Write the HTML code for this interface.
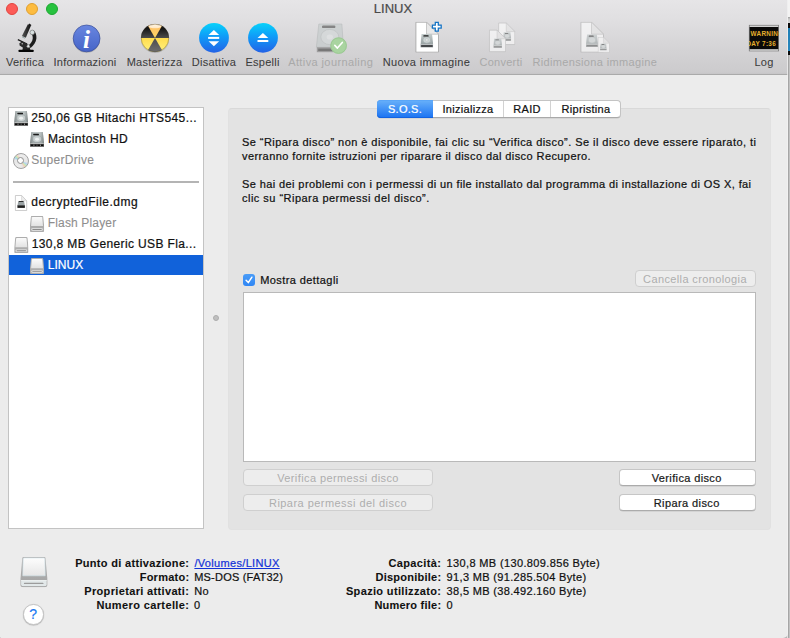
<!DOCTYPE html>
<html lang="it">
<head>
<meta charset="utf-8">
<title>LINUX</title>
<style>
html,body{margin:0;padding:0;}
body{width:790px;height:638px;overflow:hidden;position:relative;background:#b4b4b4;font-family:"Liberation Sans",sans-serif;font-size:11px;color:#1a1a1a;-webkit-text-stroke:0.22px currentColor;}
.abs{position:absolute;}
#win{position:absolute;left:0;top:0;width:788px;height:638px;background:#ececec;border-radius:0 0 5px 1.5px;overflow:hidden;}
#tb{position:absolute;left:0;top:0;width:788px;height:74px;background:linear-gradient(#e6e5e7 0px,#e0dfe1 20px,#d4d3d5 50px,#cccbcd 72px,#c6c5c7 74px);border-bottom:1px solid #aaaaaa;}
.tl{position:absolute;top:3px;width:12px;height:12px;border-radius:50%;box-sizing:border-box;}
#title{position:absolute;left:0;width:786px;top:1px;text-align:center;font-size:13px;line-height:16px;color:#4a4a4a;}
.tlab{-webkit-text-stroke:0.06px currentColor;position:absolute;top:55px;height:14px;line-height:14px;font-size:11px;color:#3c3c3c;white-space:nowrap;text-align:center;transform:translateX(-50%);letter-spacing:0.25px;}
.tlab.dis{color:#a9a9a9;-webkit-text-stroke:0;}
#side{position:absolute;left:8px;top:107px;width:194px;height:420px;background:#fff;border:1px solid #c3c3c3;}
.row{position:absolute;height:21px;line-height:21px;font-size:12px;white-space:nowrap;color:#111;letter-spacing:0.28px;}
.row.g{color:#8e8e8e;-webkit-text-stroke:0.1px currentColor;}
#box{position:absolute;left:228px;top:108px;width:543px;height:421.5px;background:#e3e3e3;border:1px solid #e1e1e1;border-top-color:#d9d9d9;border-radius:4px;box-sizing:border-box;}
.p{position:absolute;left:242px;font-size:11px;line-height:14px;white-space:nowrap;color:#111;letter-spacing:0.27px;}
.btn{position:absolute;box-shadow:0 0.5px 0.6px rgba(0,0,0,.14);height:17px;line-height:16px;box-sizing:border-box;border-radius:4px;background:#fff;border:1px solid #c6c6c6;border-bottom-color:#ababab;text-align:center;font-size:11px;color:#1a1a1a;letter-spacing:0.3px;white-space:nowrap;}
.btn.dis{-webkit-text-stroke:0;box-shadow:none;background:#ededed;border-color:#cfcfcf;color:#aeaeae;}
.tab{position:absolute;top:100px;height:18px;line-height:18.4px;text-align:center;font-size:11px;color:#111;letter-spacing:0.3px;white-space:nowrap;}
.inf{position:absolute;font-size:11px;line-height:14px;white-space:nowrap;color:#111;letter-spacing:0.25px;}
.inf.b{font-weight:bold;text-align:right;letter-spacing:0.2px;-webkit-text-stroke:0.08px currentColor;}
</style>
</head>
<body>
<div id="edge" class="abs" style="left:788px;top:0;width:2px;height:638px;background:linear-gradient(90deg,#a6a6a6 0,#a6a6a6 1px,#c2c2c2 1px,#c2c2c2 2px);"></div>
<div class="abs" style="left:788px;top:0;width:2px;height:55px;background:linear-gradient(#f3f3f3 0,#f3f3f3 17px,#9c9c9c 17px,#c8c8c8 19px,#d8d8d8 23px,#0a0a0a 23px,#0a0a0a 28px,#1f7fb6 28px,#2a86bc 51px,#0a0a0a 51px,#0a0a0a 55px);"></div>
<div class="abs" style="left:787px;top:0;width:1px;height:638px;background:#f3f3f3;z-index:5;opacity:.7"></div>
<div id="win">
  <div id="tb">
    <div class="tl" style="left:6px;background:#fc5b57;border:0.5px solid #e2443f;"></div>
    <div class="tl" style="left:26px;background:#fdbc40;border:0.5px solid #e0a030;"></div>
    <div class="tl" style="left:46px;background:#27c23f;border:0.5px solid #1ea732;"></div>
    <div id="title">LINUX</div>
    <svg class="abs" style="left:0;top:0;" width="788" height="75" viewBox="0 0 788 75">
<defs>
  <linearGradient id="gInfo" x1="0" y1="0" x2="0" y2="1"><stop offset="0" stop-color="#6886e0"/><stop offset="1" stop-color="#4664c8"/></linearGradient>
  <linearGradient id="gBlue" x1="0" y1="0" x2="0" y2="1"><stop offset="0" stop-color="#08d2fa"/><stop offset="0.45" stop-color="#0f9cf8"/><stop offset="1" stop-color="#2362e6"/></linearGradient>
  <linearGradient id="gBlk" x1="0" y1="0" x2="0" y2="1"><stop offset="0" stop-color="#2a2a2a"/><stop offset="0.3" stop-color="#141414"/><stop offset="1" stop-color="#4c4c4c"/></linearGradient>
  <linearGradient id="gOr" x1="0" y1="0" x2="0" y2="1"><stop offset="0" stop-color="#fff0d8"/><stop offset="0.35" stop-color="#ffc468"/><stop offset="1" stop-color="#ffd860"/></linearGradient>
  <linearGradient id="gYe" x1="0" y1="0" x2="0" y2="1"><stop offset="0" stop-color="#ffdc4e"/><stop offset="1" stop-color="#fff27e"/></linearGradient>
  <linearGradient id="gGr" x1="0" y1="0" x2="0" y2="1"><stop offset="0" stop-color="#4c4c4c"/><stop offset="1" stop-color="#707070"/></linearGradient>
  <linearGradient id="gHd" x1="0" y1="0" x2="0" y2="1"><stop offset="0" stop-color="#c4cccc"/><stop offset="1" stop-color="#9aa3a4"/></linearGradient>
  <linearGradient id="gScope" x1="0" y1="0" x2="1" y2="0"><stop offset="0" stop-color="#555"/><stop offset="1" stop-color="#111"/></linearGradient>
  <clipPath id="cBurn"><circle cx="155" cy="38" r="14"/></clipPath>
  <clipPath id="cLog"><rect x="749" y="25" width="30" height="26"/></clipPath>
  <symbol id="hd" viewBox="0 0 14 15">
    <path d="M1.3,0.2 H12.7 L14,11.4 H0 Z" fill="url(#gHd)"/>
    <ellipse cx="7" cy="6.7" rx="4.3" ry="3.5" fill="#cdd4d4" stroke="#98a1a2" stroke-width="0.5"/>
    <ellipse cx="7" cy="6.7" rx="1.6" ry="1.3" fill="#e6eaea" stroke="#a8b0b0" stroke-width="0.4"/>
    <rect x="3.2" y="1.5" width="5.8" height="1.5" rx="0.5" fill="#1c1c1c"/>
    <rect x="0" y="11.4" width="14" height="3.4" fill="#70757a"/>
    <rect x="1" y="12.8" width="12" height="1" fill="#141414"/>
    <rect x="0" y="11.2" width="14" height="0.6" fill="#e0e4e4"/>
  </symbol>
  <symbol id="hdl" viewBox="0 0 14 15">
    <path d="M1.3,0.2 H12.7 L14,11.4 H0 Z" fill="url(#gHd)"/>
    <ellipse cx="7" cy="6.7" rx="4.3" ry="3.5" fill="#d3d9d9" stroke="#a4acad" stroke-width="0.5"/>
    <rect x="3.2" y="1.5" width="5.8" height="1.5" rx="0.5" fill="#2a2a2a"/>
    <rect x="0" y="11.4" width="14" height="3.4" fill="#8e9292"/>
    <rect x="1" y="13" width="12" height="0.9" fill="#3a3a3a"/>
    <rect x="0" y="11.2" width="14" height="0.6" fill="#e6eaea"/>
  </symbol>
  <symbol id="doc" viewBox="0 0 24 31">
    <path d="M0.9,0.5 H11.5 L23.5,12.5 V30.5 H0.9 Z" fill="#fff" stroke="#a9a9a9" stroke-width="0.9" stroke-linejoin="round"/>
    <path d="M11.5,0.5 V12.5 H23.5 Z" fill="#e9e9e9" stroke="#b4b4b4" stroke-width="0.7" stroke-linejoin="round"/>
  </symbol>
</defs>

<!-- Verifica: microscope -->
<g>
  <path d="M27.9,24.2 L31.0,25.6 L25.8,37.7 L21.9,36.0 Z" fill="url(#gScope)"/>
  <path d="M29.2,23.6 L31.4,24.9 L30.9,25.9 L28.6,24.6 Z" fill="#111"/>
  <path d="M22.0,36.2 L25.3,37.8 L24.9,38.8 L22.2,37.4 Z" fill="#9aa"/>
  <path d="M33.2,30.6 C35.5,31.5 36.7,35 36.4,38.6 C36,42.5 33.5,45.8 30.6,48 L28.2,45.6 C30.5,44 32.4,41.5 32.7,38.8 C33,36.5 32.2,34.5 30.8,33.6 Z" fill="#1c1c1c"/>
  <path d="M18.1,39.1 L27.4,43.4 L26.8,44.6 L17.6,40.2 Z" fill="#181818"/>
  <path d="M19.4,43.2 L22.2,41.6 L27.8,44.4 L27.4,47.2 L22.6,47.4 L19.6,45.6 Z" fill="#2a2a2a"/>
  <path d="M23,47 H29.6 L30.4,50 H22.4 Z" fill="#242424"/>
  <rect x="18.4" y="49.8" width="15.4" height="2.1" rx="1" fill="#050505"/>
  <circle cx="32.3" cy="32.4" r="2.3" fill="#d8e0e0" stroke="#555" stroke-width="0.5"/>
  <circle cx="28.3" cy="46.2" r="1.5" fill="#e4e8e8" stroke="#444" stroke-width="0.4"/>
  <circle cx="22.2" cy="43.8" r="0.7" fill="#ccc"/>
</g>

<!-- Informazioni -->
<g>
  <ellipse cx="86.6" cy="39.6" rx="13.4" ry="13.2" fill="#000" opacity="0.18"/>
  <circle cx="86.6" cy="38.4" r="13.4" fill="url(#gInfo)" stroke="#3a4e98" stroke-width="0.7"/>
  <text x="86.5" y="47.9" text-anchor="middle" font-family="Liberation Serif, serif" font-style="italic" font-weight="bold" font-size="25" fill="#fff">i</text>
</g>

<!-- Masterizza -->
<g>
  <ellipse cx="155" cy="39.4" rx="14" ry="13.6" fill="#000" opacity="0.15"/>
  <g clip-path="url(#cBurn)">
    <rect x="141" y="24" width="28" height="14" fill="url(#gBlk)"/>
    <rect x="141" y="38" width="28" height="14" fill="url(#gYe)"/>
    <path d="M155,38 L146.34,23 H163.66 Z" fill="url(#gOr)"/>
    <path d="M155,38 L146.34,53 H163.66 Z" fill="url(#gGr)"/>
    <ellipse cx="155" cy="26.4" rx="6" ry="1.9" fill="#fff" opacity="0.6"/>
  </g>
  <circle cx="155" cy="38" r="13.8" fill="none" stroke="#3a3420" stroke-width="0.5" opacity="0.6"/>
</g>

<!-- Disattiva -->
<g>
  <circle cx="214" cy="37.8" r="14.9" fill="url(#gBlue)"/>
  <path d="M213.9,30 L219.2,34.9 H208.6 Z" fill="#fff"/>
  <rect x="208.1" y="36.9" width="11.1" height="2" fill="#fff"/>
  <path d="M213.9,46.2 L219.2,41.2 H208.6 Z" fill="#fff"/>
</g>

<!-- Espelli -->
<g>
  <circle cx="263" cy="37.8" r="14.9" fill="url(#gBlue)"/>
  <path d="M262.9,32.9 L268.3,37.9 H257.6 Z" fill="#fff"/>
  <rect x="257.5" y="40" width="10.8" height="2" fill="#fff"/>
</g>

<!-- Attiva journaling -->
<g opacity="0.6">
  <path d="M318.8,24 H341.9 L343.4,47.2 H316.4 Z" fill="#c3caca" stroke="#9aa0a0" stroke-width="0.5"/>
  <ellipse cx="329.8" cy="37" rx="9" ry="7.6" fill="#d2d8d8" stroke="#aab0b0" stroke-width="0.6"/>
  <ellipse cx="329.8" cy="37" rx="3.2" ry="2.6" fill="#e2e6e6"/>
  <rect x="322" y="25.4" width="13.4" height="2.7" rx="1.2" fill="#4a4a4a"/>
  <rect x="316.8" y="47.2" width="26.6" height="5" fill="#7c7c7c"/>
  <rect x="318.2" y="48.6" width="23.6" height="2.4" fill="#3c3c3c"/>
</g>
<g>
  <circle cx="338.6" cy="45.6" r="8.2" fill="#a9d4a0"/>
  <circle cx="338.6" cy="45.6" r="7.8" fill="none" stroke="#96c48e" stroke-width="0.8"/>
  <path d="M334.8,45.4 L337.4,48.1 L342.3,42.4" fill="none" stroke="#fff" stroke-width="1.6" stroke-linecap="round" stroke-linejoin="round"/>
</g>

<!-- Nuova immagine -->
<g>
  <use href="#doc" x="415" y="21.7" width="24" height="31"/>
  <use href="#hd" x="420.4" y="33.6" width="12.8" height="14.2"/>
  <path d="M435.3,22.3 H438.3 V25.2 H441.2 V28.2 H438.3 V31.1 H435.3 V28.2 H432.4 V25.2 H435.3 Z" fill="#fff" stroke="#1272c4" stroke-width="1.25" stroke-linejoin="miter"/>
</g>

<!-- Converti -->
<g opacity="0.6">
  <use href="#doc" x="498" y="21.9" width="17.2" height="23.8"/>
  <use href="#hdl" x="503" y="32" width="8.2" height="9"/>
  <use href="#doc" x="488.8" y="29" width="17.2" height="23.8"/>
  <use href="#hdl" x="493.3" y="38.2" width="8.8" height="10"/>
</g>

<!-- Ridimensiona immagine -->
<g opacity="0.6">
  <use href="#doc" x="580" y="21.7" width="24" height="31"/>
  <use href="#hdl" x="586" y="34" width="12" height="13.4"/>
  <use href="#doc" x="597.6" y="37" width="12.2" height="15.7"/>
  <use href="#hdl" x="600" y="43.3" width="6.8" height="7.3"/>
</g>

<!-- Log -->
<g>
  <rect x="749.2" y="25.2" width="29.5" height="25.8" fill="#0a0a0a"/>
  <rect x="749.2" y="25.2" width="29.5" height="1.7" fill="#e9e9e9"/>
  <rect x="749.2" y="49.2" width="29.5" height="1.8" fill="#dcdcdc"/>
  <rect x="749.2" y="25.2" width="29.5" height="25.8" fill="none" stroke="#777" stroke-width="0.6"/>
  <g clip-path="url(#cLog)" font-family="Liberation Sans, sans-serif" font-weight="bold" font-size="7.4" fill="#e6b02e" letter-spacing="0.35">
    <text transform="translate(750.6 36) scale(0.86 1)">WARNING</text>
    <text transform="translate(746.4 46.2) scale(0.86 1)">DAY 7:36</text>
  </g>
</g>
</svg>

    <div class="tlab" style="left:25px;">Verifica</div>
    <div class="tlab" style="left:85px;">Informazioni</div>
    <div class="tlab" style="left:154.5px;">Masterizza</div>
    <div class="tlab" style="left:214px;">Disattiva</div>
    <div class="tlab" style="left:262.5px;">Espelli</div>
    <div class="tlab dis" style="left:330.7px;letter-spacing:0.4px;">Attiva journaling</div>
    <div class="tlab" style="left:426.5px;letter-spacing:0.35px;">Nuova immagine</div>
    <div class="tlab dis" style="left:501px;">Converti</div>
    <div class="tlab dis" style="left:594.8px;letter-spacing:0.35px;">Ridimensiona immagine</div>
    <div class="tlab" style="left:764px;">Log</div>
  </div>

  <div id="side"></div>
  <div class="abs" style="left:9px;top:255px;width:194px;height:20px;background:#1162da;"></div>
  <div class="abs" style="left:13px;top:181px;width:186px;height:2px;background:#b4b4b4;"></div>
  <div class="row" style="left:31.2px;top:108px;letter-spacing:0.406px;">250,06 GB Hitachi HTS545...</div>
  <div class="row" style="left:47.9px;top:129px;letter-spacing:0.405px;">Macintosh HD</div>
  <div class="row g" style="left:31.2px;top:150px;letter-spacing:0.31px;">SuperDrive</div>
  <div class="row" style="left:31.3px;top:192px;letter-spacing:0.473px;">decryptedFile.dmg</div>
  <div class="row g" style="left:47.8px;top:213px;letter-spacing:0.15px;">Flash Player</div>
  <div class="row" style="left:31.8px;top:234px;letter-spacing:0.364px;">130,8 MB Generic USB Fla...</div>
  <div class="row" style="left:47.8px;top:255px;color:#fff;letter-spacing:0.02px;">LINUX</div>
<div class="abs" style="left:12.9px;top:152.9px;width:16px;height:16px;box-sizing:border-box;border-radius:50%;border:0.9px solid #a2a2a2;background:conic-gradient(from 0deg,#ededed 0deg,#e6e6e6 100deg,#b4d2f0 118deg,#c6eab6 133deg,#f2ceb8 148deg,#e6e6e6 166deg,#ededed 200deg,#e6e6e6 282deg,#a8d6f0 298deg,#c4eab4 313deg,#f4d4c4 328deg,#e9e9e9 346deg,#ededed 360deg);"></div>
  <div class="abs" style="left:17.4px;top:157.4px;width:7px;height:7px;box-sizing:border-box;border-radius:50%;border:1.2px solid #909090;background:#fdfdfd;"></div>
  
<svg class="abs" style="left:0;top:100px;" width="210" height="190" viewBox="0 100 210 190">
<defs>
  <linearGradient id="gHd2" x1="0" y1="0" x2="0" y2="1"><stop offset="0" stop-color="#b4bcbc"/><stop offset="1" stop-color="#8e9798"/></linearGradient>
  <linearGradient id="gHdH" x1="0" y1="0" x2="1" y2="0"><stop offset="0" stop-color="#59605f" stop-opacity="0.55"/><stop offset="0.3" stop-color="#dfe5e5" stop-opacity="0.25"/><stop offset="0.7" stop-color="#dfe5e5" stop-opacity="0.25"/><stop offset="1" stop-color="#59605f" stop-opacity="0.55"/></linearGradient>
  <linearGradient id="gFace" x1="0" y1="0" x2="0" y2="1"><stop offset="0" stop-color="#fbfbfb"/><stop offset="1" stop-color="#e2e2e2"/></linearGradient>
  <linearGradient id="gCd" x1="0" y1="0" x2="1" y2="1"><stop offset="0" stop-color="#e4e4e4"/><stop offset="0.2" stop-color="#dcdcdc"/><stop offset="0.26" stop-color="#a8d8ee"/><stop offset="0.31" stop-color="#c8ecb8"/><stop offset="0.36" stop-color="#f0d8cc"/><stop offset="0.42" stop-color="#f0f0f0"/><stop offset="0.58" stop-color="#f0f0f0"/><stop offset="0.64" stop-color="#f0d0b8"/><stop offset="0.69" stop-color="#ccecb8"/><stop offset="0.74" stop-color="#b0d0f0"/><stop offset="0.8" stop-color="#dcdcdc"/><stop offset="1" stop-color="#e4e4e4"/></linearGradient>
  <symbol id="hds" viewBox="0 0 14 15">
    <path d="M1.2,0 H12.8 L14,11.4 H0 Z" fill="url(#gHd2)"/>
    <path d="M1.2,0 H12.8 L14,11.4 H0 Z" fill="url(#gHdH)"/>
    <ellipse cx="7" cy="7" rx="4.4" ry="3.5" fill="#c9d0d0" stroke="#8f9899" stroke-width="0.6"/>
    <ellipse cx="7" cy="7.1" rx="2" ry="1.5" fill="#eef1f1"/>
    <rect x="3.1" y="1.7" width="5.8" height="1.4" rx="0.4" fill="#1a1a1a"/>
    <rect x="0" y="11.4" width="14" height="3.4" fill="#4e4e4e"/>
    <rect x="0.8" y="12.5" width="12.4" height="1.5" fill="#0c0c0c"/>
    <rect x="3.4" y="12.5" width="0.9" height="1.5" fill="#9a9a9a"/>
    <rect x="6.6" y="12.5" width="0.7" height="1.5" fill="#777"/>
    <rect x="10" y="12.5" width="0.9" height="1.5" fill="#9a9a9a"/>
    <rect x="0.2" y="11.1" width="13.6" height="0.6" fill="#dfe3e3"/>
  </symbol>
  <symbol id="rem" viewBox="0 0 14.3 16">
    <path d="M2.2,0 H12.1 Q13.2,0 13.3,1 L14.3,10.6 V14.8 Q14.3,16 13.1,16 H1.2 Q0,16 0,14.8 V10.6 L1,1 Q1.1,0 2.2,0 Z" fill="#adadad"/>
    <path d="M2.7,1 H11.6 Q12.3,1 12.4,1.7 L13.1,10.2 H1.2 L1.9,1.7 Q2,1 2.7,1 Z" fill="url(#gFace)"/>
    <rect x="1.3" y="12.2" width="11.7" height="2.8" rx="1.4" fill="#dadada"/>
    <rect x="2.4" y="13.2" width="9.5" height="0.9" rx="0.4" fill="#8c8c8c"/>
  </symbol>
</defs>
<use href="#hds" x="14.1" y="111.1" width="14.1" height="14.9"/>
<use href="#hds" x="30" y="132.1" width="14.1" height="14.9"/>
<!-- CD (html) -->
<!-- dmg -->
<g>
  <path d="M15.4,195.5 H21.6 L26.7,200.8 V210.5 H15.4 Z" fill="#fff" stroke="#b9b9b9" stroke-width="0.7" stroke-linejoin="round"/>
  <path d="M21.6,195.5 V200.8 H26.7 Z" fill="#eee" stroke="#c2c2c2" stroke-width="0.5" stroke-linejoin="round"/>
  <path d="M18.3,201 H24 L24.9,206 H17.4 Z" fill="#9aa2a4"/>
  <rect x="18.9" y="201" width="4.4" height="0.9" fill="#222"/>
  <rect x="17.4" y="205.4" width="7.5" height="2.5" fill="#1e1e1e"/>
</g>
<use href="#rem" x="29.9" y="215.9" width="14.3" height="16"/>
<use href="#rem" x="14.2" y="237.1" width="14.3" height="16"/>
<use href="#rem" x="29.9" y="258" width="14.3" height="16"/>
</svg>


  <div class="abs" style="left:212.9px;top:314.9px;width:6px;height:6px;border-radius:50%;background:#bfbfbf;border:0.6px solid #adadad;box-sizing:border-box;"></div>

  <div id="box"></div>
  <div id="tabs" class="abs" style="left:377px;top:100px;width:244px;height:18px;box-sizing:border-box;border-radius:4px;background:#fff;border:1px solid #c4c4c4;border-bottom-color:#a9a9a9;box-shadow:0 0.5px 0.5px rgba(0,0,0,.12);"></div>
  <div class="abs" style="left:377px;top:100px;width:56px;height:18px;border-radius:4px 0 0 4px;background:linear-gradient(#69b1fa,#1a72f2);box-shadow:inset 0 -1px 0 #1263e2, inset 0 1px 0 #5aa6f8;"></div>
  <div class="abs" style="left:503px;top:101px;width:1px;height:16px;background:#d2d2d2;"></div>
  <div class="abs" style="left:550px;top:101px;width:1px;height:16px;background:#d2d2d2;"></div>
  <div class="tab" style="left:377px;width:56px;color:#fff;">S.O.S.</div>
  <div class="tab" style="left:433px;width:70px;">Inizializza</div>
  <div class="tab" style="left:504px;width:46px;">RAID</div>
  <div class="tab" style="left:551px;width:70px;">Ripristina</div>

  <div class="p" style="top:135px;letter-spacing:0.447px;">Se “Ripara disco” non è disponibile, fai clic su “Verifica disco”. Se il disco deve essere riparato, ti</div>
  <div class="p" style="top:149px;letter-spacing:0.415px;">verranno fornite istruzioni per riparare il disco dal disco Recupero.</div>
  <div class="p" style="top:177px;letter-spacing:0.399px;">Se hai dei problemi con i permessi di un file installato dal programma di installazione di OS X, fai</div>
  <div class="p" style="top:191px;letter-spacing:0.478px;">clic su “Ripara permessi del disco”.</div>

  <div class="abs" id="cb" style="left:243px;top:274px;width:12px;height:12px;border-radius:3px;background:linear-gradient(#4a9cf7,#2f86f4);"></div>
  <svg class="abs" style="left:243px;top:274px;" width="12" height="12" viewBox="0 0 12 12"><path d="M3.1,6.3 L5.3,8.6 L8.9,3.2" fill="none" stroke="#fff" stroke-width="1.5" stroke-linecap="round" stroke-linejoin="round"/></svg>
  <div class="p" style="left:260.2px;top:273px;letter-spacing:0.418px;">Mostra dettagli</div>
  <div class="btn dis" style="left:635px;top:270px;width:121px;padding-right:1px;letter-spacing:0.378px;">Cancella cronologia</div>

  <div class="abs" style="left:243px;top:292px;width:513px;height:170px;box-sizing:border-box;background:#fff;border:1px solid #b9b9b9;"></div>

  <div class="btn dis" style="left:243px;top:469px;width:190px;letter-spacing:0.4px;">Verifica permessi disco</div>
  <div class="btn dis" style="left:243px;top:494px;width:190px;letter-spacing:0.458px;">Ripara permessi del disco</div>
  <div class="btn" style="left:619px;top:469px;width:137px;padding-right:1.5px;letter-spacing:0.369px;">Verifica disco</div>
  <div class="btn" style="left:619px;top:494px;width:137px;padding-right:1.5px;letter-spacing:0.409px;">Ripara disco</div>

  <div class="inf b" style="left:0;width:189.3px;top:556px;letter-spacing:0.315px;">Punto di attivazione:</div>
  <div class="inf b" style="left:0;width:189.3px;top:570px;letter-spacing:0.243px;">Formato:</div>
  <div class="inf b" style="left:0;width:189.3px;top:584px;letter-spacing:0.345px;">Proprietari attivati:</div>
  <div class="inf b" style="left:0;width:189.3px;top:598px;letter-spacing:0.38px;">Numero cartelle:</div>
  <div class="inf" style="left:194.4px;top:556px;color:#1432d8;text-decoration:underline;letter-spacing:0.331px;">/Volumes/LINUX</div>
  <div class="inf" style="left:194.2px;top:570px;letter-spacing:0.208px;">MS-DOS (FAT32)</div>
  <div class="inf" style="left:194.2px;top:584px;letter-spacing:0.3px;">No</div>
  <div class="inf" style="left:194px;top:598px;">0</div>

  <div class="inf b" style="left:200px;width:241.3px;top:556px;letter-spacing:0.375px;">Capacità:</div>
  <div class="inf b" style="left:200px;width:241.3px;top:570px;letter-spacing:0.236px;">Disponibile:</div>
  <div class="inf b" style="left:200px;width:241.3px;top:584px;letter-spacing:0.341px;">Spazio utilizzato:</div>
  <div class="inf b" style="left:200px;width:241.3px;top:598px;letter-spacing:0.227px;">Numero file:</div>
  <div class="inf" style="left:446.6px;top:556px;letter-spacing:0.36px;">130,8 MB (130.809.856 Byte)</div>
  <div class="inf" style="left:446.6px;top:570px;letter-spacing:0.335px;">91,3 MB (91.285.504 Byte)</div>
  <div class="inf" style="left:446.6px;top:584px;letter-spacing:0.335px;">38,5 MB (38.492.160 Byte)</div>
  <div class="inf" style="left:446.6px;top:598px;">0</div>

  <svg class="abs" style="left:19px;top:555px;" width="30" height="34" viewBox="19 555 30 34">
  <defs><linearGradient id="gBigF" x1="0" y1="0" x2="0" y2="1"><stop offset="0" stop-color="#fdfdfd"/><stop offset="1" stop-color="#e6e6e6"/></linearGradient>
  <linearGradient id="gBigB" x1="0" y1="0" x2="0" y2="1"><stop offset="0" stop-color="#b4b4b4"/><stop offset="1" stop-color="#a4a4a4"/></linearGradient></defs>
  <path d="M23.6,556.9 H44.2 Q45.4,556.9 45.5,558 L47.3,578.5 V585 Q47.3,586.9 45.4,586.9 H22.4 Q20.5,586.9 20.5,585 V578.5 L22.3,558 Q22.4,556.9 23.6,556.9 Z" fill="url(#gBigB)"/>
  <path d="M24.3,558 H43.7 Q44.7,558 44.8,559 L45.2,575.8 H22.8 L23.2,559 Q23.3,558 24.3,558 Z" fill="url(#gBigF)" stroke="#d4e6ec" stroke-width="0.6"/>
  <path d="M21.1,580.2 H46.7 V584.6 Q46.7,586.2 45.1,586.2 H22.7 Q21.1,586.2 21.1,584.6 Z" fill="#e2e8e9"/>
  <rect x="23.9" y="582.8" width="19.6" height="1.2" rx="0.6" fill="#9c9c9c"/>
  <rect x="21.1" y="580.2" width="25.6" height="0.8" fill="#f2f6f6"/>
  <path d="M21.3,585.6 Q21.8,586.6 22.9,586.6 H44.9 Q46,586.6 46.5,585.6" fill="none" stroke="#a8a8a8" stroke-width="0.7"/>
</svg>
  <div class="abs" id="help" style="left:23px;top:604px;width:20.5px;height:20.5px;border-radius:50%;background:#fff;border:1px solid #c4c4c4;box-sizing:border-box;box-shadow:0 0.5px 1px rgba(0,0,0,.25);text-align:center;line-height:19px;font-size:14px;color:#1b7af2;">?</div>
</div>
</body>
</html>
